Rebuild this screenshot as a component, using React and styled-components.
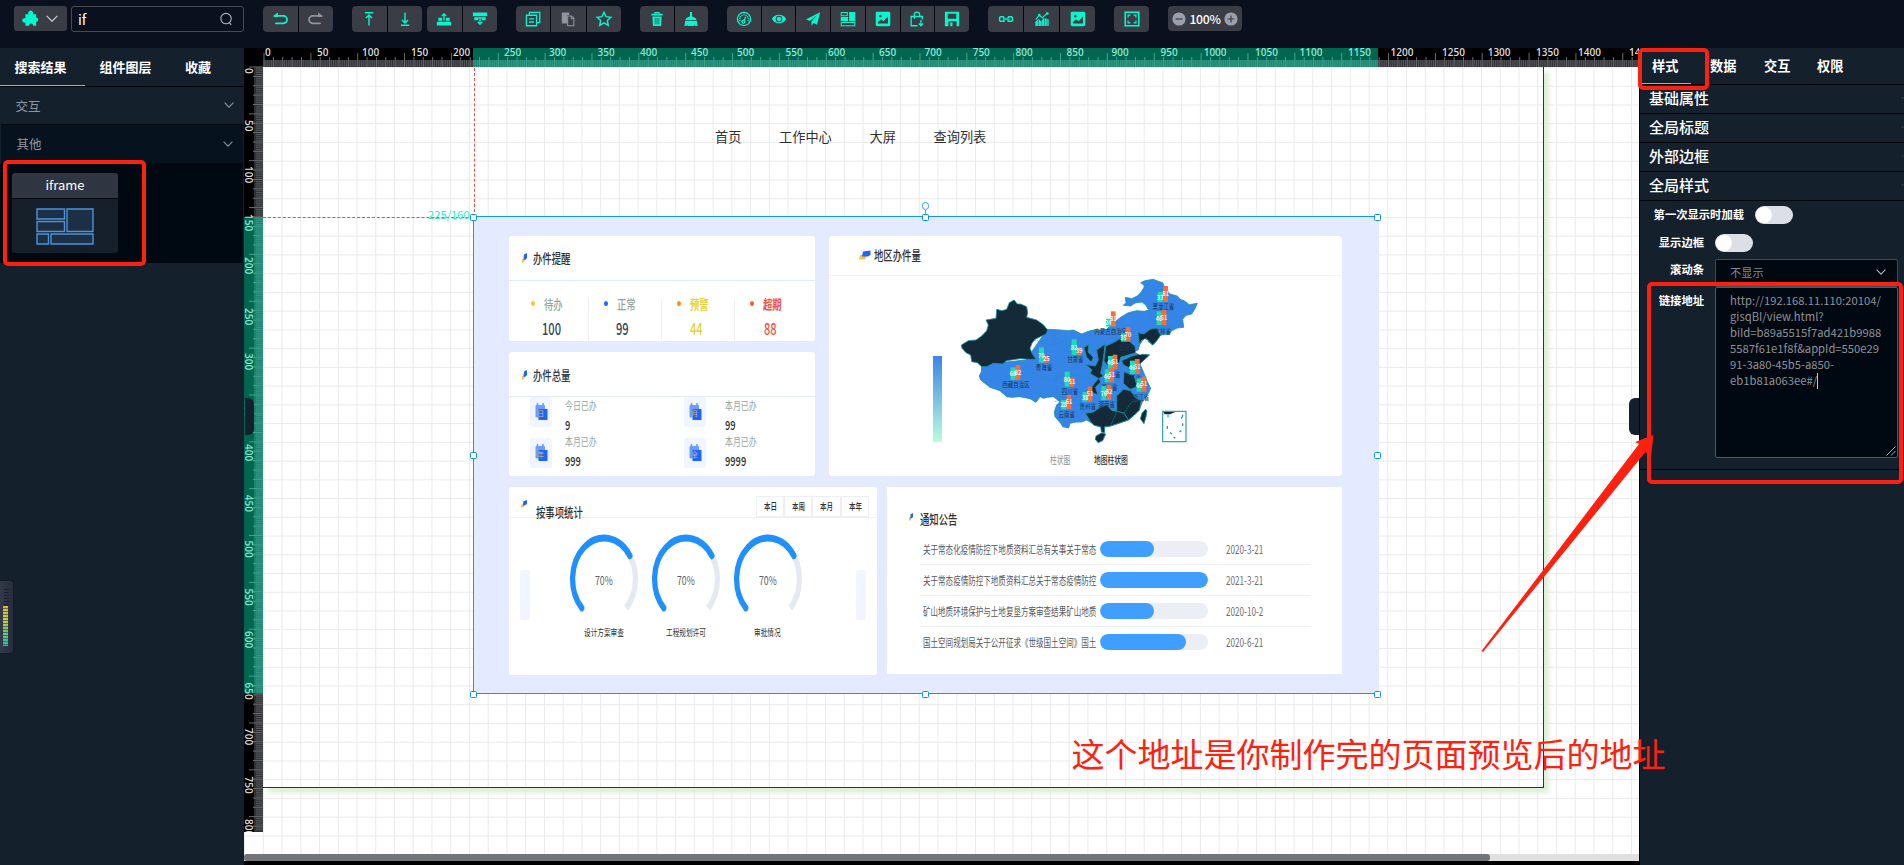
import React from "react";
import styled, { createGlobalStyle } from "styled-components";

const Global = createGlobalStyle`
  * { box-sizing: border-box; }
  body { margin: 0; background: #000; overflow: hidden; }
  body, textarea { font-family: "Noto Sans CJK SC", "Noto Sans", sans-serif; }
`;

const MINT = "#05f7cb";
const PANEL = "#15202d";
const RED = "#ff2010";

const Screen = styled.div`
  position: relative;
  width: 1904px;
  height: 865px;
  display: flex;
  flex-direction: column;
  overflow: hidden;
  background: #000;
  color: #fff;
`;

/* ---------- top bar ---------- */

const TopBar = styled.header`
  flex: none;
  height: 48px;
  display: flex;
  align-items: flex-start;
  padding: 6px 0 0 14px;
  background: #0a101d;
`;

const ComponentMenu = styled.div`
  width: 53px;
  height: 25px;
  margin-right: 4px;
  display: flex;
  align-items: center;
  gap: 7px;
  padding-left: 8px;
  border-radius: 3px;
  background: #3a3c46;
  color: ${MINT};
`;

const SearchBox = styled.div`
  width: 173px;
  height: 26px;
  margin-right: 19px;
  display: flex;
  align-items: center;
  justify-content: space-between;
  padding: 0 10px 1px 6px;
  border: 1px solid #484b55;
  border-radius: 3px;
  font-size: 14px;
`;

const ToolGroup = styled.div`
  width: ${(p) => p.$width}px;
  height: 26px;
  margin-right: ${(p) => p.$after ?? 19}px;
  display: flex;
  gap: 1px;
  border-radius: 4px;
  overflow: hidden;
  background: #05070c;
`;

const ToolButton = styled.div`
  flex: 1;
  display: flex;
  align-items: center;
  justify-content: center;
  background: #3a3c46;
  color: ${(p) => (p.$off ? "#8f949e" : MINT)};
`;

const ZoomControl = styled.div`
  width: 74px;
  height: 25px;
  display: flex;
  align-items: center;
  justify-content: space-between;
  padding: 0 4px;
  border-radius: 4px;
  background: #3a3c46;
  font-size: 12.2px;
  font-weight: 500;
  letter-spacing: -0.3px;
`;

const Icon = ({ children, size = 18 }) => (
  <svg width={size} height={size} viewBox="0 0 18 18" fill="none" stroke="currentColor" strokeWidth="1.5">
    {children}
  </svg>
);

const solid = { fill: "currentColor", stroke: "none" };

const icons = {
  puzzle: (
    <path
      d="M7 4.6A2.6 2.6 0 1 1 11.4 4.6H15V8A2.2 2.2 0 0 1 15 12.4V16.6H11.8A2.2 2.2 0 0 0 7.4 16.6H3.6V13.2A2.4 2.4 0 1 1 3.6 8.8V4.6Z"
      {...solid}
    />
  ),
  undo: (
    <>
      <path d="M3 5.6H12.8A3.9 3.9 0 0 1 12.8 13.8H4.4" strokeWidth="2" strokeLinecap="round" />
      <path d="M6.6 1.8L1 5.8L3.6 6.8H6.8Z" {...solid} />
    </>
  ),
  redo: (
    <>
      <path d="M15 5.6H5.2A3.9 3.9 0 0 0 5.2 13.8H13.6" strokeWidth="2" strokeLinecap="round" />
      <path d="M11.4 1.8L17 5.8L14.4 6.8H11.2Z" {...solid} />
    </>
  ),
  top: <path d="M4.4 1.9H13.8M9 16.4V4.5M5.6 8L9 4.4L12.4 8" strokeWidth="1.6" />,
  bottom: <path d="M4.4 16H13.8M9 1.6V13.5M5.6 10L9 13.6L12.4 10" strokeWidth="1.6" />,
  up: (
    <>
      <path d="M2.6 7.6H7V11H11V7.6H15.4V11H2.6ZM1 12.2H17V16.4H1Z" {...solid} />
      <path d="M9 11V3.6M6.4 5.8L9 3L11.6 5.8" strokeWidth="1.5" />
    </>
  ),
  down: (
    <>
      <path d="M1 1.6H17V5.8H1ZM2.6 7H15.4V10.4H11V8.5H7V10.4H2.6Z" {...solid} />
      <path d="M9 7V14.5M6.4 12.2L9 15L11.6 12.2" strokeWidth="1.5" />
    </>
  ),
  copy: <path d="M5 4.4V1.6H16.6V13H13.6M1.6 4.8H13V16.6H1.6ZM4.5 8.8H10.2M4.5 12.4H10.2" strokeWidth="1.5" />,
  paste: (
    <>
      <path d="M2 1.6H10.4V4.6H8V14H2Z" {...solid} />
      <path d="M8.6 5.6H13L15.6 8.2V16.6H8.6ZM12.6 6V8.8H15.2" strokeWidth="1.2" />
    </>
  ),
  star: <path d="M9 1.4L11.3 6.3L16.8 7L12.7 10.6L13.8 16.2L9 13.4L4.2 16.2L5.3 10.6L1.2 7L6.7 6.3Z" strokeWidth="1.6" />,
  trash: (
    <path
      d="M6 1.2H12V3.2H15.4V5.2H2.6V3.2H6ZM7.3 2.3V3.2H10.7V2.3ZM3.8 6.2H14.2L13.6 16.8H4.4ZM6.5 8V15H7.3V8ZM8.6 8V15H9.4V8ZM10.7 8V15H11.5V8Z"
      {...solid}
      fillRule="evenodd"
    />
  ),
  broom: <path d="M7.8 1H10.2V6.2C12.4 6.8 15 7.8 15.2 10H2.8C3 7.8 5.6 6.8 7.8 6.2ZM2.4 11H15.6L16.4 16.8H13.8L13 14.5V16.8H5L4.8 14.5L4 16.8H1.6Z" {...solid} />,
  gauge: (
    <>
      <circle cx="9" cy="9" r="7.4" />
      <path d="M4.6 11.4A4.9 4.9 0 1 1 13.4 11.4" strokeDasharray="1.4 0.9" />
      <circle cx="8.4" cy="11.9" r="1.7" />
      <path d="M9.2 10.6L11 6.5" />
    </>
  ),
  eye: (
    <>
      <path d="M1 9C4 2.7 14 2.7 17 9C14 15.3 4 15.3 1 9Z" {...solid} />
      <circle cx="9" cy="9" r="3.1" stroke="#3a3c46" strokeWidth="1.2" />
    </>
  ),
  send: <path d="M17 1.4L1.2 9.2L5.4 11.2L13.8 4.6L7.2 12.2V16.6L9.8 13.4L13.6 15.4Z" {...solid} />,
  layout: (
    <>
      <path d="M1.4 1.6H8.2V5.4H1.4ZM1.4 13H16.6V16.6H1.4Z" strokeWidth="1.2" />
      <path d="M0.8 6.8H9V11.4H0.8ZM10.2 1H17.2V11.4H10.2Z" {...solid} />
    </>
  ),
  image: (
    <path
      d="M0.8 2.4Q0.8 0.8 2.4 0.8H15.6Q17.2 0.8 17.2 2.4V15.6Q17.2 17.2 15.6 17.2H2.4Q0.8 17.2 0.8 15.6ZM6 4.2A1.5 1.5 0 1 0 6 7.2A1.5 1.5 0 1 0 6 4.2ZM3.4 14.2H14.6V6.2L9.6 11.4L6.8 9.2L3.4 12.4Z"
      {...solid}
      fillRule="evenodd"
    />
  ),
  bag: <path d="M9.5 16.6H2.4V6.2H15V9.6M6 8.6V4.2A3 3 0 0 1 12 4.2V6M13.4 10V16.4M11 14L13.4 16.6L15.8 14" />,
  save: <path d="M1 0.8H17V17.2H14.2V11.6H5V17.2H1ZM4.2 3V8.8H13.8V3ZM7 13H9.6V17.2H7Z" {...solid} fillRule="evenodd" />,
  link: (
    <>
      <path d="M6.6 6.4H3.2A1.4 1.4 0 0 0 1.8 7.8V10.2A1.4 1.4 0 0 0 3.2 11.6H6.6V10M6.6 6.4V8M11.4 6.4H14.8A1.4 1.4 0 0 1 16.2 7.8V10.2A1.4 1.4 0 0 1 14.8 11.6H11.4V10M11.4 6.4V8" strokeWidth="1.7" />
      <path d="M5.4 9H12.6" strokeWidth="1.8" />
    </>
  ),
  chart: (
    <>
      <path d="M1.5 12L5.5 9L8 11.4L11 8L16.5 9.4V17H1.5Z" {...solid} />
      <path d="M4.9 10V17M8.3 11V17M11.7 8V17M14.6 9V17" stroke="#3a3c46" strokeWidth="0.6" />
      <path d="M2 9.6L6 4.6L9.2 7.8L14.8 2.4" strokeWidth="1.3" />
      <circle cx="6" cy="4.6" r="1.4" {...solid} />
      <circle cx="15" cy="2.8" r="1.5" {...solid} />
    </>
  ),
  full: (
    <>
      <rect x="1.4" y="1.4" width="15.2" height="15.2" strokeWidth="1.8" />
      <path d="M4.6 7.2V4.6H7.2M10.8 4.6H13.4V7.2M13.4 10.8V13.4H10.8M7.2 13.4H4.6V10.8" strokeWidth="1.4" />
    </>
  ),
};

const groups = [
  { width: 70, items: ["undo", "redo"], off: ["redo"] },
  { width: 70, items: ["top", "bottom"], after: 5 },
  { width: 70, items: ["up", "down"] },
  { width: 105, items: ["copy", "paste", "star"], off: ["paste"] },
  { width: 68, items: ["trash", "broom"] },
  { width: 242, items: ["gauge", "eye", "send", "layout", "image", "bag", "save"] },
  { width: 107, items: ["link", "chart", "image"] },
  { width: 35, items: ["full"] },
];

const Chevron = ({ width = 10, color = "#8b95a1" }) => (
  <svg width={width} height={width * 0.6} viewBox="0 0 10 6" fill="none" stroke={color} strokeWidth="1.1">
    <path d="M0.6 0.7L5 5.2L9.4 0.7" />
  </svg>
);

const RoundSign = ({ plus }) => (
  <svg width="14" height="14" viewBox="0 0 14 14">
    <circle cx="7" cy="7" r="6.6" fill="#9aa0ac" />
    <path d={plus ? "M3.5 7H10.5M7 3.5V10.5" : "M3.5 7H10.5"} stroke="#3a3c46" strokeWidth="1.2" />
  </svg>
);

/* ---------- left panel ---------- */

const Main = styled.div`
  flex: 1;
  min-height: 0;
  display: flex;
`;

const LeftPanel = styled.aside`
  flex: none;
  width: 244px;
  background: ${PANEL};
`;

const LeftTabs = styled.div`
  height: 39px;
  display: flex;
  align-items: flex-start;
  border-bottom: 1px solid #020509;
`;

const LeftTab = styled.div`
  width: ${(p) => p.$width}px;
  height: 38px;
  padding-left: 14.5px;
  font-size: 13px;
  font-weight: 700;
  line-height: 37px;
  border-bottom: 1px solid ${(p) => (p.$active ? MINT : "transparent")};
`;

const Category = styled.div`
  height: ${(p) => (p.$open ? 39 : 38)}px;
  margin: 0 1px;
  display: flex;
  align-items: center;
  justify-content: space-between;
  padding: 0 ${(p) => (p.$open ? 10 : 9)}px 1px ${(p) => (p.$open ? 15.5 : 14.5)}px;
  border: solid #03080e;
  border-width: 0 0 1px;
  background: ${(p) => (p.$open ? "#06121d" : PANEL)};
  color: #8d97a3;
  font-size: 12.5px;
`;

const CategoryBody = styled.div`
  height: 99px;
  padding: 9px 0 0 12px;
  margin-right: 1px;
  background: #000811;
`;

const WidgetCard = styled.div`
  width: 106px;
  border-radius: 3px;
  overflow: hidden;
  background: #16202a;
`;

const WidgetName = styled.div`
  height: 26px;
  border-bottom: 1px solid #05090f;
  background: #2f3541;
  text-align: center;
  font-size: 13px;
  line-height: 24px;
`;

const WidgetPreview = styled.div`
  height: 54px;
  display: flex;
  align-items: center;
  justify-content: center;
`;

/* ---------- canvas ---------- */

const SCALE = 0.9371;

const CanvasArea = styled.section`
  position: relative;
  width: 1395px;
  display: flex;
  flex-direction: column;
  overflow: hidden;
`;

const Stage = styled.div`
  position: relative;
  height: 806px;
  background: #fff;
  overflow: hidden;
`;

const GridSvg = styled.svg`
  position: absolute;
  inset: 0;
`;

const Scrollbar = styled.div`
  height: 7px;
  background: #e0e0e0;
`;

const ScrollThumb = styled.div`
  width: 1246px;
  height: 7px;
  border-radius: 3px;
  background: #727579;
`;

const Page = styled.div`
  position: absolute;
  left: 19px;
  top: 19px;
  width: 1281px;
  height: 720.5px;
  border: solid #30332f;
  border-width: 0 1px 1px 0;
  box-shadow: 5px 5px 5px #dcefd8;
`;

const PageNav = styled.nav`
  display: flex;
  gap: 37.7px;
  padding: 59px 0 0 452px;
  color: #303133;
  font-size: 13.2px;
  line-height: 22px;
`;

const RulerSvg = styled.svg`
  position: absolute;
  left: 0;
  top: 0;
  font-family: "Open Sans", "Noto Sans", sans-serif;
`;

const topLabels = [
  265, 317, 362, 411, 453, 504, 549, 597.5, 640, 691, 737, 785.5, 828, 879, 924.5, 972.7, 1015.5, 1066.5, 1111.5, 1160.5,
  1203.7, 1255, 1299.5, 1348, 1390.5, 1442, 1487.7, 1536, 1578, 1629,
];
const sideLabels = [68, 120, 166, 214, 257, 308, 353, 400, 444, 494.7, 540.6, 588.6, 631, 682.6, 728, 776.6, 819];

const ticks = (count) => {
  let minor = "";
  let major = "";
  for (let i = 0; i <= count; i += 2) {
    const x = (i * SCALE).toFixed(2);
    if (i % 50 === 0) major += `M${x} 5V19`;
    else if (i % 10 === 0) major += `M${x} 9V19`;
    else minor += `M${x} 12V19`;
  }
  return { minor, major };
};

const TickMarks = ({ count }) => {
  const { minor, major } = ticks(count);
  return (
    <>
      <path d={minor} stroke="#58595c" strokeWidth="0.9" />
      <path d={major} stroke="#6b6c70" strokeWidth="1" />
    </>
  );
};

const Rulers = () => (
  <RulerSvg width="1395" height="784" viewBox="0 0 1395 784" fontSize="10" fontWeight="600" fill="#dcdcdc">
    <rect width="1395" height="19" fill="#000" />
    <rect width="19" height="784" fill="#000" />
    <rect x="19" y="12" width="1376" height="7" fill="#303134" />
    <rect x="10" y="19" width="9" height="765" fill="#303134" />
    <g transform="translate(20 0)">
      <TickMarks count={1470} />
    </g>
    <g transform="translate(0 19) matrix(0 1 1 0 0 0)">
      <TickMarks count={815} />
    </g>
    {topLabels.map((x, i) => (
      <text key={i} x={x - 244} y="8">{i * 50}</text>
    ))}
    {sideLabels.map((y, i) => (
      <text key={i} transform={`translate(0.6 ${y - 48}) rotate(90)`}>{i * 50}</text>
    ))}
    <rect x="229" width="905" height="19" fill="#00ffc6" opacity="0.4" />
    <rect y="169" width="19" height="476.5" fill="#00ffc6" opacity="0.4" />
  </RulerSvg>
);

const GuideV = styled.div`
  position: absolute;
  left: 230px;
  top: 20px;
  height: 149px;
  border-left: 1px dashed #ee4a46;
`;

const GuideH = styled.div`
  position: absolute;
  left: 19px;
  top: 169px;
  width: 211px;
  border-top: 1px dashed #ee4a46;
`;

const Coordinates = styled.div`
  position: absolute;
  left: 184px;
  top: 158px;
  color: #25ecc4;
  font-size: 11.2px;
  line-height: 16px;
`;

const Frame = styled.div`
  position: absolute;
  left: 229px;
  top: 168px;
  width: 906px;
  height: 478px;
  padding: 19px 0 0 35px;
  border: solid #1497f3;
  border-width: 1px 0 1px 1px;
  background: #e4eaff;
  display: grid;
  grid-template-columns: 306px 14px 47.5px 10.5px 455px;
  grid-template-rows: 105.3px 11px 124px 11px 188px;
  color: #303133;
`;

const Handle = styled.div`
  position: absolute;
  left: ${(p) => p.$x - 3.5}px;
  top: ${(p) => p.$y - 3.5}px;
  width: 7px;
  height: 7px;
  border: 1px solid #0c90f0;
  border-radius: 1.5px;
  background: #fff;
`;

const RotateHandle = styled.div`
  position: absolute;
  left: 678px;
  top: 154px;
  width: 7px;
  height: 8px;
  border: 1.2px solid #2a9cf0;
  border-radius: 4px;
  background: #fff;
  &::after {
    content: "";
    position: absolute;
    left: 2px;
    top: 7px;
    height: 5px;
    border-left: 1px solid #3aa5f2;
  }
`;

/* ---------- embedded dashboard ---------- */

const Card = styled.div`
  grid-column: ${(p) => p.$col};
  grid-row: ${(p) => p.$row};
  height: ${(p) => p.$height ?? "auto"};
  border-radius: ${(p) => p.$radius ?? 3}px;
  background: #fff;
`;

const CardHead = styled.div`
  height: ${(p) => p.$height}px;
  display: flex;
  align-items: center;
  padding: ${(p) => p.$pad};
  border-bottom: 1px solid ${(p) => p.$line ?? "#e3eafb"};
`;

/* Text drawn narrower than its natural width; $w is the width it keeps in the layout. */
const Narrow = styled.div`
  flex: none;
  width: ${(p) => p.$w}px;
  transform: scaleX(${(p) => p.$k ?? 0.72});
  transform-origin: left center;
  white-space: nowrap;
  font-size: ${(p) => p.$size}px;
  font-weight: ${(p) => p.$weight ?? 400};
  line-height: ${(p) => p.$line ?? 16}px;
  color: ${(p) => p.$color ?? "#303133"};
`;

const Mark = ({ width = 5, height = 10 }) => (
  <svg width={width} height={height} viewBox="0 0 10 20" preserveAspectRatio="none" overflow="visible">
    <path d="M0 12L6 10L5 17L0 20Z" fill="#ffc23d" />
    <path d="M4 3L10 0V10L6 14L3 13Z" fill="#1c66ff" />
  </svg>
);

const HeadIcon = styled.div`
  flex: none;
  width: ${(p) => p.$w}px;
  padding-top: ${(p) => p.$top ?? 0}px;
  display: flex;
  align-self: ${(p) => (p.$top ? "flex-start" : "center")};
`;

const LowTitle = styled.div`
  padding-top: 20px;
`;

const Reminders = styled.div`
  display: flex;
  padding: 18px 0 0 7px;
`;

const Reminder = styled.div`
  width: 73px;
  height: 42px;
  border-right: 1px solid ${(p) => (p.$last ? "transparent" : "#eef1fa")};
`;

const ReminderLabel = styled.div`
  display: flex;
  align-items: center;
  height: 11px;
  padding-left: 15px;
`;

const Dot = styled.div`
  flex: none;
  width: 4px;
  height: 5px;
  margin: -1px 8.5px 0 0;
  border-radius: 50%;
  background: ${(p) => p.$color};
`;

const ReminderValue = styled.div`
  padding: 8.5px 0 0 ${(p) => p.$left}px;
`;

const Totals = styled.div`
  display: grid;
  grid-template-columns: 154px 150px;
  grid-template-rows: 30px 30px;
  row-gap: 10.5px;
  padding-left: 21px;
`;

const Total = styled.div`
  display: flex;
  gap: ${(p) => p.$gap}px;
`;

const Tile = styled.div`
  width: 22px;
  height: 30px;
  display: flex;
  align-items: center;
  justify-content: center;
  border-radius: 3px;
  background: #f0f5ff;
`;

const TotalText = styled.div`
  display: flex;
  flex-direction: column;
  gap: 4px;
  margin-top: ${(p) => (p.$raised ? -4.5 : -0.5)}px;
`;

const MapBody = styled.div`
  display: flex;
  height: 174px;
`;

const ColorBar = styled.div`
  width: 9px;
  height: 86px;
  margin: 80px 0 0 104px;
  background: linear-gradient(#3a85e8, #bafcdc);
`;

const MapSvg = styled.svg`
  flex: none;
  width: 270px;
  height: 180px;
  margin: -6px 0 0 -2px;
`;

const MapLegend = styled.div`
  display: flex;
  gap: 24px;
  padding: 2.5px 0 0 221px;
`;

const PeriodTabs = styled.div`
  display: flex;
  align-self: flex-start;
  margin: 8.3px 0 0 173.5px;
`;

const Period = styled.div`
  width: 28.2px;
  height: 21.5px;
  padding: 1.5px 0 0 7px;
  border: 1px solid #eceff6;
`;

const GaugeRow = styled.div`
  display: flex;
  padding-left: 11px;
`;

const SideBar = styled.div`
  width: 10px;
  height: 50px;
  margin: 52px ${(p) => p.$after ?? 0}px 0 ${(p) => p.$before ?? 0}px;
  border-radius: 3px;
  background: #f0f5ff;
`;

const GaugeBox = styled.div`
  position: relative;
  width: 82px;
  padding-top: 16px;
  display: flex;
  flex-direction: column;
  align-items: center;
`;

const GaugeValue = styled.div`
  position: absolute;
  left: 32.5px;
  top: 53.5px;
`;

const GaugeName = styled.div`
  width: ${(p) => p.$w}px;
`;

const Notices = styled.div`
  padding: 3px 31px 0 33px;
`;

const NoticeRow = styled.div`
  height: 31px;
  display: flex;
  align-items: center;
  padding-left: 3px;
  border-bottom: 1px solid ${(p) => (p.$last ? "transparent" : "#eff0f2")};
`;

const Progress = styled.div`
  width: 108px;
  height: 16px;
  margin: 0 18px 0 3.5px;
  border-radius: 8px;
  overflow: hidden;
  background: #ebeef5;
`;

const ProgressFill = styled.div`
  width: ${(p) => p.$value}%;
  height: 100%;
  border-radius: 8px;
  background: #409eff;
`;

const reminders = [
  { label: "待办", value: "100", dot: "#fdc12f", color: "#94a3a0", num: "#35465c", left: 26 },
  { label: "正常", value: "99", dot: "#1c66ff", color: "#94a3a0", num: "#35465c", left: 27 },
  { label: "预警", value: "44", dot: "#ff8a1c", color: "#e6d03c", num: "#e6d03c", left: 28, bold: true },
  { label: "超期", value: "88", dot: "#ff5a26", color: "#ee5041", num: "#ee5041", left: 29, bold: true },
];

const totals = [
  { glyph: "日", label: "今日已办", value: "9" },
  { glyph: "月", label: "本月已办", value: "99" },
  { glyph: "年", label: "本月已办", value: "999" },
  { glyph: "全", label: "本月已办", value: "9999" },
];

const notices = [
  { text: "关于常态化疫情防控下地质资料汇总有关事关于常态", value: 50, date: "2020-3-21" },
  { text: "关于常态疫情防控下地质资料汇总关于常态疫情防控", value: 100, date: "2021-3-21" },
  { text: "矿山地质环境保护与土地复垦方案审查结果矿山地质", value: 50, date: "2020-10-2" },
  { text: "国土空间规划局关于公开征求《世级国土空间》国土", value: 80, date: "2020-6-21" },
];

const CalendarIcon = ({ glyph }) => (
  <svg width="13" height="18" viewBox="0 0 13 18">
    <rect x="0.5" y="2" width="9.5" height="12.5" rx="1" fill="#6f9bff" />
    <path d="M2.5 0V3M8 0V3" stroke="#6f9bff" strokeWidth="1.6" />
    <rect x="3.5" y="6" width="9" height="11" fill="#1c66ff" />
    <text x="2" y="13" fontSize="7" fill="#d6b86a">{glyph}</text>
  </svg>
);

/* [name, label x, label y, left bar x, top, value, right bar x, top, value, bar bottom] */
const provinces = [
  ["黑龙江省", 670, 118, 653, 66, 33, 670, 48, 81, 96],
  ["吉林省", 668, 193, 650, 124, 46, 665, 120, 51, 165],
  ["内蒙古自治区", 512, 193, 498, 146, 24, 513, 124, 81, 170],
  ["北京市", 560, 242, 543, 190, 35, 557, 172, 70, 215],
  ["甘肃省", 406, 277, 395, 208, 82, 411, 232, 39, 255],
  ["青海省", 312, 301, 297, 232, 70, 312, 258, 25, 278],
  ["西藏自治区", 228, 353, 212, 292, 68, 227, 285, 82, 330],
  ["四川省", 390, 373, 374, 305, 80, 389, 324, 51, 350],
  ["云南省", 380, 443, 364, 390, 28, 380, 375, 61, 418],
  ["贵州省", 443, 417, 428, 366, 38, 443, 350, 51, 395],
  ["河南省", 517, 323, 504, 258, 46, 518, 254, 51, 298],
  ["湖北省", 508, 360, 494, 298, 46, 508, 292, 51, 337],
  ["湖南省", 500, 412, 484, 348, 76, 500, 344, 82, 390],
  ["江苏省", 578, 335, 570, 272, 46, 585, 267, 51, 312],
  ["浙江省", 603, 390, 590, 325, 46, 605, 320, 51, 365],
];

const ChinaMap = () => (
  <MapSvg viewBox="0 0 810 540" fontSize="20">
    <g stroke="#1b93a0" strokeWidth="2.5" strokeLinejoin="round">
      <path
        fill="#3585e8"
        d="M322 178L350 179L385 182L400 180L425 192L445 184L460 180L478 181L500 178L518 160L545 140L565 128L590 122L612 124L626 121L618 106L606 96L585 99L572 108L550 106L558 98L556 82L575 86L592 78L604 66L612 52L612 46L602 38L615 32L640 28L655 34L668 38L676 56L690 72L712 78L720 88L732 92L748 104L772 100L765 116L755 132L738 136L728 148L731 172L712 174L695 182L688 192L662 195L650 212L638 225L612 205L600 222L594 240L605 252L628 255L610 272L600 282L612 310L622 335L632 355L626 368L615 385L606 398L598 420L582 436L565 450L530 462L512 468L485 472L465 466L440 450L425 456L408 456L390 460L386 474L368 470L362 460L345 440L343 425L350 405L360 395L340 380L322 382L310 385L300 380L288 397L270 386L240 380L215 382L200 380L180 362L150 352L122 330L118 318L124 305L125 290L160 280L258 270Z"
      />
      <g fill="#142a39">
        <path d="M64 225L85 212L108 210L125 198L140 182L145 165L138 150L168 145L170 118L186 122L200 118L208 98L222 90L232 102L242 102L260 110L263 128L260 142L290 150L310 164L323 180L318 192L285 208L276 220L270 235L276 250L288 268L270 268L240 266L200 272L188 282L160 280L140 290L125 290L112 278L95 275L92 255L78 248L66 235Z" />
        <path d="M432 232L446 224L444 246L460 262L454 276L440 262Z" />
        <path d="M470 240L495 222L492 250L488 280L482 310L490 318L476 326L450 310L456 300L438 284L466 288L475 270Z" />
        <path d="M497 228L520 218L542 205L556 200L570 215L585 230L588 248L562 256L542 262L538 278L500 285L492 272Z" />
        <path d="M594 188L612 192L630 178L648 174L662 195L650 212L638 225L620 206L606 210L598 222Z" />
        <path d="M545 272L576 258L600 252L628 255L610 272L592 288L565 292L550 284Z" />
        <path d="M552 305L568 312L582 318L592 350L570 358L550 340Z" />
        <path d="M452 356L464 340L476 324L482 336L466 352L474 374L458 368Z" />
        <path d="M530 378L550 358L572 362L586 384L604 392L598 420L582 436L565 450L552 430L530 424Z" />
        <path d="M436 430L460 426L480 412L500 405L516 422L532 424L552 430L565 450L530 462L512 468L494 470L494 488L484 486L482 470L462 466L450 452Z" />
        <path d="M468 498L486 488L497 492L488 512L474 518L466 508Z" />
        <path d="M601 446L606 430L616 418L621 422L618 440L612 461Z" />
      </g>
      <path d="M585 246L600 238L606 218L614 206L624 212L618 226L606 240L614 250L600 254Z" fill="#fff" stroke="none" />
      <path
        fill="none"
        strokeWidth="1.6"
        strokeDasharray="5 2"
        d="M322 178L340 205L370 210L380 228L410 230L430 260M285 210L330 225L370 215M250 275L260 300L310 325L345 330L370 310L430 318L455 330M350 310L345 340L360 390M345 395L385 380L430 400M420 395L440 430M612 46L640 60L668 60M625 121L635 150L690 165L700 182M500 285L490 310L545 330M490 340L530 350M480 370L476 412M530 424L512 468M552 430L575 395L600 392M600 282L560 300M545 140L520 200"
      />
    </g>
    <rect x="668" y="424" width="70" height="91" fill="#fff" stroke="#25a0a8" strokeWidth="3.5" />
    <path d="M670 426H706L690 433H674Z" fill="#142a39" />
    <path d="M684 434V442M682 468V476M690 488L696 492M700 502L706 504M718 486L724 482M728 460V468M729 434L724 446" stroke="#25a0a8" strokeWidth="4" />
    {provinces.map(([name, lx, ly, ax, ay, av, bx, by, bv, bottom]) => (
      <g key={name} textAnchor="middle">
        <text transform={`translate(${lx} ${ly - 1}) scale(0.78 1)`} fontSize="21" fill="#1c3350">{name}</text>
        <rect x={ax} y={ay} width="15" height={bottom - ay} fill="#1fdcb6" />
        <rect x={bx} y={by} width="14" height={bottom - by} fill="#f66f3a" />
        <text transform={`translate(${ax + 7} ${(ay + bottom) / 2 + 8}) scale(0.85 1)`} fontWeight="500" fill="#fff">{av}</text>
        <text transform={`translate(${bx + 7} ${(by + bottom) / 2 + 6}) scale(0.85 1)`} fontWeight="500" fill="#fff">{bv}</text>
      </g>
    ))}
  </MapSvg>
);

const Gauge = ({ name, width }) => (
  <GaugeBox>
    <svg width="70" height="90" viewBox="-35 -45 70 90" fill="none" strokeWidth="6.8">
      <g transform="scale(0.766 1)">
        <path d="M-29 29A41 41 0 1 1 29 29" stroke="#e5e9f2" />
        <path d="M-29 29A41 41 0 1 1 33.8 -23.2" stroke="#1f90ff" strokeLinecap="round" />
      </g>
    </svg>
    <GaugeValue>
      <Narrow $w={17} $size={11.8} $k={0.74} $color="#606266">70%</Narrow>
    </GaugeValue>
    <GaugeName $w={width}>
      <Narrow $w={width} $size={9.5} $k={0.7}>{name}</Narrow>
    </GaugeName>
  </GaugeBox>
);

const Dashboard = () => (
  <Frame>
    <Card $col="1" $row="1">
      <CardHead $height={44.5} $pad="0 0 0 13px">
        <HeadIcon $w={10.5}><Mark /></HeadIcon>
        <Narrow $w={38} $size={13} $weight={500}>办件提醒</Narrow>
      </CardHead>
      <Reminders>
        {reminders.map((r, i) => (
          <Reminder key={r.label} $last={i === 3}>
            <ReminderLabel>
              <Dot $color={r.dot} />
              <Narrow $w={19} $size={13} $weight={r.bold ? 700 : 500} $color={r.color}>{r.label}</Narrow>
            </ReminderLabel>
            <ReminderValue $left={r.left}>
              <Narrow $w={19} $size={16.4} $k={0.68} $weight={500} $line={20} $color={r.num}>{r.value}</Narrow>
            </ReminderValue>
          </Reminder>
        ))}
      </Reminders>
    </Card>

    <Card $col="1" $row="3">
      <CardHead $height={45} $pad="2px 0 0 13px">
        <HeadIcon $w={10.5}><Mark /></HeadIcon>
        <Narrow $w={38} $size={13} $weight={500} $color="#2c3a4d">办件总量</Narrow>
      </CardHead>
      <Totals>
        {totals.map((t, i) => (
          <Total key={t.glyph} $gap={i % 2 ? 18.5 : 13}>
            <Tile><CalendarIcon glyph={t.glyph} /></Tile>
            <TotalText $raised={i > 1}>
              <Narrow $w={32} $size={11} $color="#94a3a0">{t.label}</Narrow>
              <Narrow $w={20} $size={12.6} $k={0.74} $weight={500}>{t.value}</Narrow>
            </TotalText>
          </Total>
        ))}
      </Totals>
    </Card>

    <Card $col="3 / 6" $row="1 / 4" $radius={4}>
      <CardHead $height={39.5} $pad="0 0 0 30px" $line="#f0f3fa">
        <HeadIcon $w={14.5}>
          <svg width="12" height="10" viewBox="0 0 12 10">
            <path d="M1 5H8L6 9.5H0Z" fill="#ffc23d" />
            <path d="M4 1.5L11.5 0.5V5L9 6.5H3Z" fill="#1c66ff" />
          </svg>
        </HeadIcon>
        <Narrow $w={47} $size={13} $weight={500}>地区办件量</Narrow>
      </CardHead>
      <MapBody>
        <ColorBar />
        <ChinaMap />
      </MapBody>
      <MapLegend>
        <Narrow $w={20} $size={9.7} $k={0.7} $color="#8f8f8f">柱状图</Narrow>
        <Narrow $w={34} $size={9.7} $k={0.7} $weight={500}>地图柱状图</Narrow>
      </MapLegend>
    </Card>

    <Card $col="1 / 4" $row="5">
      <CardHead $height={31} $pad="0 0 0 12px" $line="#eaf3f8">
        <HeadIcon $w={15} $top={13}><Mark width={6} height={8} /></HeadIcon>
        <LowTitle>
          <Narrow $w={46.5} $size={13} $weight={500}>按事项统计</Narrow>
        </LowTitle>
        <PeriodTabs>
          {["本日", "本周", "本月", "本年"].map((t) => (
            <Period key={t}>
              <Narrow $w={13} $size={9.6} $k={0.68} $weight={500}>{t}</Narrow>
            </Period>
          ))}
        </PeriodTabs>
      </CardHead>
      <GaugeRow>
        <SideBar $after={32.7} />
        <Gauge name="设计方案审查" width={40} />
        <Gauge name="工程规划许可" width={40} />
        <Gauge name="审批情况" width={27} />
        <SideBar $before={47.3} />
      </GaugeRow>
    </Card>

    <Card $col="5" $row="5" $radius={1} $height="187px">
      <CardHead $height={44} $pad="21px 0 0 22px" $line="transparent">
        <HeadIcon $w={11} $top={5}><Mark width={4} height={8} /></HeadIcon>
        <Narrow $w={38} $size={13} $weight={500}>通知公告</Narrow>
      </CardHead>
      <Notices>
        {notices.map((n, i) => (
          <NoticeRow key={n.date} $last={i === 3}>
            <Narrow $w={173.5} $size={10.8} $k={0.698} $color="#55585e">{n.text}</Narrow>
            <Progress><ProgressFill $value={n.value} /></Progress>
            <Narrow $w={38} $size={11.4} $k={0.715} $color="#6c6f75">{n.date}</Narrow>
          </NoticeRow>
        ))}
      </Notices>
    </Card>
  </Frame>
);

const PanelHandle = styled.div`
  position: absolute;
  top: 350px;
  left: ${(p) => (p.$right ? 1385 : 1)}px;
  width: ${(p) => (p.$right ? 10 : 9)}px;
  height: 37px;
  border-radius: ${(p) => (p.$right ? "6px 0 0 6px" : "0 6px 6px 0")};
  background: ${PANEL};
`;

/* ---------- right panel ---------- */

const RightPanel = styled.aside`
  flex: 1;
  border-left: 1px solid #000;
  background: ${PANEL};
`;

const RightTabs = styled.div`
  height: 37px;
  display: flex;
  border-bottom: 1px solid #010306;
  padding-left: 2px;
`;

const RightTab = styled.div`
  width: ${(p) => p.$width}px;
  padding-left: ${(p) => p.$pad}px;
  border-bottom: 1px solid ${(p) => (p.$active ? MINT : "transparent")};
  font-size: 13.2px;
  font-weight: 700;
  line-height: 35px;
  white-space: nowrap;
`;

const Section = styled.div`
  height: 29px;
  display: flex;
  align-items: center;
  justify-content: space-between;
  padding: 0 0 3px 9px;
  border-bottom: 1px solid #010306;
  font-size: 15px;
  font-weight: 500;
  line-height: 24px;
`;

const SectionChevron = styled.div`
  width: 3px;
  display: flex;
  overflow: hidden;
`;

const FormArea = styled.div`
  height: 269px;
  padding-top: 5px;
  border-bottom: 1px solid #010306;
`;

const Field = styled.div`
  display: flex;
  align-items: flex-start;
  height: ${(p) => p.$height}px;
`;

const FieldLabel = styled.div`
  width: ${(p) => p.$width ?? 64}px;
  margin-right: 11px;
  padding-top: ${(p) => p.$top ?? 0}px;
  text-align: right;
  font-size: 11.3px;
  font-weight: 700;
  line-height: 16px;
  white-space: nowrap;
`;

const Switch = styled.div`
  width: 38px;
  height: 18px;
  padding: 1px;
  border-radius: 9px;
  background: #dcdfe6;
  &::before {
    content: "";
    display: block;
    width: 16px;
    height: 16px;
    border-radius: 8px;
    background: #fff;
  }
`;

const SelectBox = styled.div`
  width: 183px;
  height: 28px;
  display: flex;
  align-items: center;
  justify-content: space-between;
  padding: 0 11px 2px 14px;
  border: 1px solid #44474d;
  border-radius: 2px;
  background: #000811;
  color: #85888e;
  font-size: 11.2px;
`;

const AddressBox = styled.div`
  position: relative;
  width: 183px;
  height: 171px;
  padding: 4px 14px;
  border: 1px solid #55585d;
  border-radius: 2px;
  background: #000811;
  color: #8f9296;
  font-size: 11.25px;
  line-height: 16px;
  white-space: pre;
`;

const Caret = styled.span`
  display: inline-block;
  width: 1px;
  height: 16px;
  vertical-align: -4px;
  background: #c8c8c8;
`;

const ResizeGrip = styled.svg`
  position: absolute;
  right: 1px;
  bottom: 1px;
`;

const address = [
  "http://192.168.11.110:20104/",
  "gisqBI/view.html?",
  "biId=b89a5515f7ad421b9988",
  "5587f61e1f8f&appId=550e29",
  "91-3a80-45b5-a850-",
  "eb1b81a063ee#/",
];

/* ---------- overlays ---------- */

const RedBox = styled.div`
  position: absolute;
  left: ${(p) => p.$x}px;
  top: ${(p) => p.$y}px;
  width: ${(p) => p.$w}px;
  height: ${(p) => p.$h}px;
  border: 4px solid ${RED};
  border-radius: 5px;
`;

const Arrow = styled.svg`
  position: absolute;
  left: 1470px;
  top: 425px;
`;

const Remark = styled.div`
  position: absolute;
  left: 1071.5px;
  top: 728px;
  color: ${RED};
  font-size: 33px;
  line-height: 50px;
  white-space: nowrap;
`;

const Meter = styled.div`
  position: absolute;
  left: 0;
  top: 581px;
  width: 13px;
  height: 72px;
  padding: 8px 0 0 3px;
  border-radius: 0 3px 3px 0;
  background: linear-gradient(90deg, #343949, #272c3b);
  box-shadow: 0 0 2px #0008;
`;

const MeterOff = styled.div`
  width: 5px;
  height: 16px;
  margin: 0 0 1px 1px;
  background: repeating-linear-gradient(#1b202c 0 1.5px, transparent 1.5px 3px);
`;

const MeterOn = styled.div`
  width: 5px;
  height: 40px;
  background: repeating-linear-gradient(transparent 0 1.6px, #2b304099 1.6px 3px),
    linear-gradient(#d8b62e, #c4cf4a 35%, #7cc46c 60%, #1fc9a8);
`;

export default function App() {
  return (
    <Screen>
      <Global />
      <TopBar>
        <ComponentMenu>
          <Icon size={17}>{icons.puzzle}</Icon>
          <Chevron width={12} color="#c3c6cc" />
        </ComponentMenu>
        <SearchBox>
          if
          <svg width="14" height="14" viewBox="0 0 14 14" fill="none" stroke="#aeb2b9" strokeWidth="1.1">
            <circle cx="7" cy="6.6" r="5.2" />
            <path d="M10.4 10.6L12.2 12.8" />
          </svg>
        </SearchBox>
        {groups.map((g, i) => (
          <ToolGroup key={i} $width={g.width} $after={g.after}>
            {g.items.map((name) => (
              <ToolButton key={name} $off={g.off?.includes(name)}>
                <Icon size={16}>{icons[name]}</Icon>
              </ToolButton>
            ))}
          </ToolGroup>
        ))}
        <ZoomControl>
          <RoundSign />
          100%
          <RoundSign plus />
        </ZoomControl>
      </TopBar>

      <Main>
        <LeftPanel>
          <LeftTabs>
            <LeftTab $width={85} $active>搜索结果</LeftTab>
            <LeftTab $width={85.5}>组件图层</LeftTab>
            <LeftTab $width={60}>收藏</LeftTab>
          </LeftTabs>
          <Category>交互<Chevron /></Category>
          <Category $open>其他<Chevron /></Category>
          <CategoryBody>
            <WidgetCard>
              <WidgetName>iframe</WidgetName>
              <WidgetPreview>
                <svg width="58" height="37" viewBox="0 0 58 37" fill="#1c3045" stroke="#4f93dc" strokeWidth="1.4">
                  <path d="M1 1H28.5V11H1ZM31 1H57V23.5H31ZM1 13.5H28.5V23.5H1ZM1 26H12.5V36H1ZM15 26H57V36H15Z" />
                </svg>
              </WidgetPreview>
            </WidgetCard>
          </CategoryBody>
        </LeftPanel>

        <CanvasArea>
          <Stage>
            <GridSvg width="1395" height="806">
              <defs>
                <pattern id="grid" width="18.742" height="18.742" x="18.8" y="19" patternUnits="userSpaceOnUse">
                  <path d="M0.5 0V18.742M0 0.5H18.742" stroke="#eaeaea" strokeWidth="1" />
                </pattern>
              </defs>
              <rect width="1395" height="806" fill="url(#grid)" />
            </GridSvg>
            <Page>
              <PageNav>
                <span>首页</span>
                <span>工作中心</span>
                <span>大屏</span>
                <span>查询列表</span>
              </PageNav>
            </Page>
            <Rulers />
            <GuideV />
            <GuideH />
            <Coordinates>225/160</Coordinates>
            <Dashboard />
            <RotateHandle />
            {[
              [229.5, 169.5], [681.5, 169.5], [1133.5, 169.5], [229.5, 407.5], [1133.5, 407.5], [229.5, 646.5], [681.5, 646.5], [1133.5, 646.5],
            ].map(([x, y]) => (
              <Handle key={`${x}-${y}`} $x={x} $y={y} />
            ))}
            <PanelHandle />
            <PanelHandle $right />
          </Stage>
          <Scrollbar><ScrollThumb /></Scrollbar>
        </CanvasArea>

        <RightPanel>
          <RightTabs>
            <RightTab $width={49} $pad={10} $active>样式</RightTab>
            <RightTab $width={53.5} $pad={19}>数据</RightTab>
            <RightTab $width={53.5} $pad={19.5}>交互</RightTab>
            <RightTab $width={53.5} $pad={19}>权限</RightTab>
          </RightTabs>
          {["基础属性", "全局标题", "外部边框", "全局样式"].map((name) => (
            <Section key={name}>
              {name}
              <SectionChevron><Chevron /></SectionChevron>
            </Section>
          ))}
          <FormArea>
            <Field $height={28}>
              <FieldLabel $width={104}>第一次显示时加载</FieldLabel>
              <Switch />
            </Field>
            <Field $height={24.5}>
              <FieldLabel>显示边框</FieldLabel>
              <Switch />
            </Field>
            <Field $height={28}>
              <FieldLabel $top={2.5}>滚动条</FieldLabel>
              <SelectBox>不显示<Chevron width={10} color="#b0b3b8" /></SelectBox>
            </Field>
            <Field $height={171}>
              <FieldLabel $top={5}>链接地址</FieldLabel>
              <AddressBox>
                {address.join("\n")}
                <Caret />
                <ResizeGrip width="10" height="10" viewBox="0 0 10 10" stroke="#b0b0b0" strokeWidth="1">
                  <path d="M0.5 9.5L9.5 0.5M5 9.5L9.5 5" />
                </ResizeGrip>
              </AddressBox>
            </Field>
          </FormArea>
        </RightPanel>
      </Main>

      <Meter>
        <MeterOff />
        <MeterOn />
      </Meter>
      <RedBox $x={2.5} $y={160} $w={143.5} $h={106} />
      <RedBox $x={1637.5} $y={48} $w={71} $h={42} />
      <RedBox $x={1646.5} $y={282} $w={256.5} $h={202} />
      <Arrow width="190" height="235" viewBox="0 0 190 235" fill={RED}>
        <path d="M183.5 10L165 17L169 19L11.5 226L13 227L175.5 27L181 32Z" />
      </Arrow>
      <Remark>这个地址是你制作完的页面预览后的地址</Remark>
    </Screen>
  );
}
